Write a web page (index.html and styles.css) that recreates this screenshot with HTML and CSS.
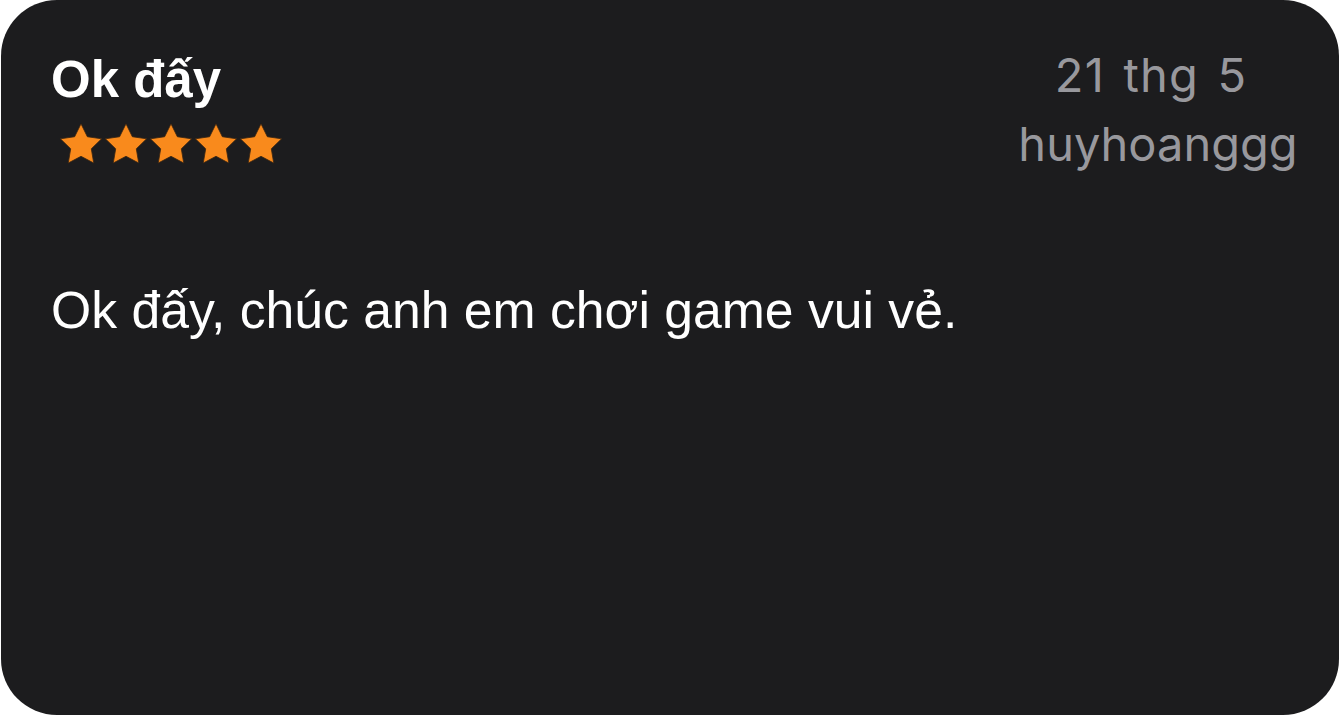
FILE: index.html
```html
<!DOCTYPE html>
<html lang="vi">
<head>
<meta charset="utf-8">
<title>Review</title>
<link rel="stylesheet" href="styles.css">
</head>
<body>
<div class="card">
  <div class="header">
    <div class="left">
      <h1 class="title">Ok đấy</h1>
      <div class="stars">
        <svg class="star" viewBox="1.6 1.6 20.8 19.9"><polygon points="12,2 15.09,8.26 22,9.27 17,14.14 18.18,21.02 12,17.77 5.82,21.02 7,14.14 2,9.27 8.91,8.26"/></svg>
        <svg class="star" viewBox="1.6 1.6 20.8 19.9"><polygon points="12,2 15.09,8.26 22,9.27 17,14.14 18.18,21.02 12,17.77 5.82,21.02 7,14.14 2,9.27 8.91,8.26"/></svg>
        <svg class="star" viewBox="1.6 1.6 20.8 19.9"><polygon points="12,2 15.09,8.26 22,9.27 17,14.14 18.18,21.02 12,17.77 5.82,21.02 7,14.14 2,9.27 8.91,8.26"/></svg>
        <svg class="star" viewBox="1.6 1.6 20.8 19.9"><polygon points="12,2 15.09,8.26 22,9.27 17,14.14 18.18,21.02 12,17.77 5.82,21.02 7,14.14 2,9.27 8.91,8.26"/></svg>
        <svg class="star" viewBox="1.6 1.6 20.8 19.9"><polygon points="12,2 15.09,8.26 22,9.27 17,14.14 18.18,21.02 12,17.77 5.82,21.02 7,14.14 2,9.27 8.91,8.26"/></svg>
      </div>
    </div>
    <div class="meta">
      <div class="date">21 thg 5</div>
      <div class="author">huyhoanggg</div>
    </div>
  </div>
  <p class="body">Ok đấy, chúc anh em chơi game vui vẻ.</p>
</div>
</body>
</html>
```

FILE: styles.css
```css
html, body {
  margin: 0;
  padding: 0;
  background: #ffffff;
}

.card {
  box-sizing: border-box;
  margin: 0 0 0 1px;
  width: 1338px;
  height: 715px;
  border-radius: 56px;
  background: #1c1c1e;
  padding: 54px 31px 0 50px;
  font-family: "Liberation Sans", Arial, sans-serif;
  color: #ffffff;
}

.header {
  display: flex;
  justify-content: space-between;
  align-items: flex-start;
}

.title {
  margin: 0;
  font-size: 51px;
  line-height: 51px;
  font-weight: 700;
}

.stars {
  display: flex;
  gap: 1px;
  margin-top: 18px;
  margin-left: 8px;
}

.star {
  width: 44px;
  height: 41px;
  display: block;
}

.star polygon {
  fill: #f98a1c;
  stroke: #3b2612;
  stroke-width: 0.4;
  stroke-linejoin: round;
}

.meta {
  width: 300px;
  text-align: center;
  font-family: Inter, "Noto Sans", sans-serif;
  color: #98989d;
  font-size: 47px;
  line-height: 47px;
  margin-top: -3px;
}

.date {
  letter-spacing: 1.2px;
  word-spacing: 4px;
  margin-right: 14px;
}

.author {
  margin-top: 22px;
}

.body {
  margin: 118px 0 0 0;
  font-size: 51.7px;
  line-height: 51px;
  font-weight: 400;
}
```
